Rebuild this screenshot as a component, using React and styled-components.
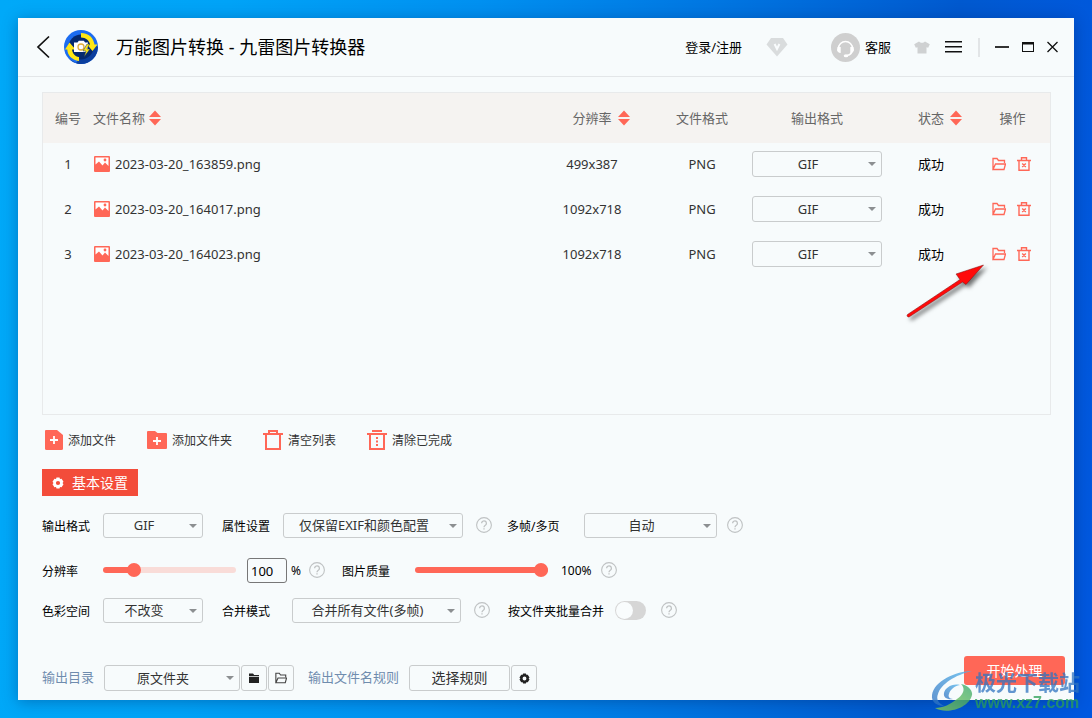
import { useState } from 'react';
import styled, { createGlobalStyle } from 'styled-components';

const GlobalStyle = createGlobalStyle`
  * {
    box-sizing: border-box;
  }
  body {
    margin: 0;
    font-family: 'Noto Sans', 'Noto Sans CJK SC', sans-serif;
    font-size: 13px;
    line-height: 20px;
    color: #333;
  }
  button, input, select {
    font: inherit;
    color: inherit;
    margin: 0;
  }
  svg {
    display: block;
    flex: none;
  }
`;

const Desktop = styled.div`
  position: relative;
  display: flex;
  min-height: 100vh;
  padding: 18px;
  overflow: hidden;
  background: linear-gradient(
    94deg,
    #00a9f8 0%,
    #00a3f7 20%,
    #0090f0 42%,
    #0077e2 62%,
    #0059cf 84%,
    #0058e0 100%
  );
`;

const Window = styled.main`
  flex: 1;
  min-width: 0;
  display: flex;
  flex-direction: column;
  background: #f7fbfc;
  box-shadow: 0 2px 14px rgba(0, 30, 90, 0.35);
`;

const TitleBar = styled.header`
  display: flex;
  align-items: center;
  height: 59px;
  padding: 0 16px 0 18px;
  border-bottom: 1px solid #e3e6e8;
  color: #000;
`;

const Title = styled.h1`
  flex: 1;
  margin: 0 0 0 18px;
  font-size: 18px;
  line-height: 28px;
  font-weight: 400;
`;

const IconButton = styled.button`
  display: flex;
  align-items: center;
  gap: 5px;
  padding: 0;
  border: 0;
  background: none;
  cursor: pointer;
`;

const TitleTools = styled.div`
  display: flex;
  align-items: center;
  gap: ${props => props.$gap}px;
  margin-left: ${props => props.$left || 0}px;
`;

const Divider = styled.span`
  width: 2px;
  height: 19px;
  margin: 0 15px 0 16px;
  background: #e2e5e7;
`;

const Content = styled.div`
  flex: 1;
  display: flex;
  flex-direction: column;
  padding: 15px 23px 0 24px;
`;

const ListPanel = styled.section`
  position: relative;
  flex: 1;
  min-height: 190px;
  border: 1px solid #e8eaeb;
`;

const FileTable = styled.table`
  width: 100%;
  table-layout: fixed;
  border-collapse: collapse;
  text-align: center;
`;

const Col = styled.col`
  width: ${props => (props.$width ? `${props.$width}px` : 'auto')};
`;

const HeadCell = styled.th`
  height: 50px;
  padding: 0;
  background: #f5f3f1;
  font-weight: 400;
  color: #666;
  text-align: ${props => (props.$left ? 'left' : 'center')};
`;

const Cell = styled.td`
  height: 45px;
  padding: 0 0 3px;
`;

const Status = styled(Cell)`
  color: #000;
`;

const SortLabel = styled.span`
  display: grid;
  grid-template-columns: ${props => (props.$left ? 'auto 1fr' : '1fr auto 1fr')};
  align-items: center;
  gap: ${props => (props.$left ? 4 : 6)}px;
  span {
    grid-column: ${props => (props.$left ? 1 : 2)};
  }
`;

const FileName = styled.div`
  display: flex;
  align-items: center;
  gap: 5px;
  padding-left: 1px;
`;

const RowActions = styled.div`
  display: flex;
  justify-content: center;
  gap: 11px;
  padding-right: 2px;
`;

const SelectBox = styled.span`
  position: relative;
  display: inline-block;
  vertical-align: middle;
  width: ${props => props.$width}px;
  height: ${props => (props.$tall ? 26 : 25)}px;
  &::after {
    content: '';
    position: absolute;
    right: 6px;
    top: 11px;
    border: 4px solid transparent;
    border-top-color: #8c8f91;
    border-bottom: 0;
    pointer-events: none;
  }
  select {
    appearance: none;
    display: block;
    width: 100%;
    height: 100%;
    padding: 0 18px ${props => (props.$tall ? 0 : 2)}px 0;
    border: 1px solid #c9cccd;
    border-radius: 3px;
    background: transparent;
    text-align: center;
    text-align-last: center;
  }
`;

const Toolbar = styled.div`
  display: flex;
  gap: 31px;
  margin-top: 15px;
  padding-left: 1px;
  font-size: 12px;
  span {
    padding-top: 2px;
  }
`;

const ToolButton = styled(IconButton)`
  height: 20px;
`;

const SettingsTab = styled.button`
  display: flex;
  align-items: center;
  align-self: flex-start;
  gap: 8px;
  height: 27px;
  margin-top: 19px;
  padding: 0 10px;
  border: 0;
  background: #f34c3a;
  color: #fff;
  font-size: 14px;
`;

const SettingRow = styled.div`
  display: flex;
  align-items: center;
  height: 25px;
  margin-top: ${props => props.$top}px;
`;

const Label = styled.label`
  width: ${props => props.$width}px;
  margin-left: ${props => props.$left || 0}px;
  padding-top: 2px;
  color: #000;
  font-size: 12px;
  white-space: nowrap;
`;

const Help = styled.button`
  display: flex;
  padding: 0;
  border: 0;
  background: none;
  margin: 0 0 1px ${props => props.$left}px;
`;

const Slider = styled.input`
  appearance: none;
  width: 133px;
  height: 6px;
  margin-bottom: 1px;
  border-radius: 3px;
  background: linear-gradient(
    90deg,
    #ff6757 ${props => props.$fill}%,
    #f9dcd8 ${props => props.$fill}%
  );
  &::-webkit-slider-thumb {
    appearance: none;
    width: 14px;
    height: 14px;
    border-radius: 50%;
    background: #ff6757;
  }
`;

const NumberBox = styled.input`
  width: 40px;
  height: 25px;
  margin: 0 4px 0 11px;
  padding: 0 3px;
  border: 1px solid #777;
  border-radius: 3px;
  background: transparent;
  color: #000;
`;

const Value = styled.output`
  margin-left: ${props => props.$left || 0}px;
  color: #000;
  font-size: 12px;
`;

const Switch = styled.input`
  appearance: none;
  display: flex;
  width: 31px;
  height: 19px;
  margin-left: 11px;
  padding: 1px;
  border-radius: 10px;
  background: #d6d6d6;
  &::before {
    content: '';
    width: 17px;
    height: 17px;
    border-radius: 50%;
    background: #f9fcfd;
  }
  &:checked {
    justify-content: flex-end;
    background: #ff6757;
  }
`;

const Footer = styled.footer`
  display: flex;
  align-items: flex-start;
  justify-content: space-between;
  margin-top: 33px;
  padding: 0 9px 9px 24px;
`;

const OutputBar = styled.div`
  display: flex;
  align-items: center;
  padding-top: 9px;
`;

const OutputLabel = styled.label`
  margin: 0 ${props => props.$right}px 0 ${props => props.$left || 0}px;
  padding-bottom: 2px;
  color: #6f8cae;
`;

const SmallButton = styled.button`
  display: flex;
  align-items: center;
  justify-content: center;
  width: ${props => (props.$wide ? 101 : 26)}px;
  height: 26px;
  margin-left: 1px;
  padding: 0;
  border: 1px solid #c9cccd;
  border-radius: 3px;
  background: transparent;
  font-size: 14px;
`;

const StartButton = styled.button`
  width: 101px;
  height: 29px;
  padding: 0;
  border: 0;
  border-radius: 3px;
  background: #ff6757;
  color: #fff;
  font-size: 14px;
`;

const Pointer = styled.svg`
  position: absolute;
  right: 56px;
  top: 168px;
  pointer-events: none;
`;

const Watermark = styled.div`
  position: absolute;
  right: 12px;
  bottom: 6px;
  display: flex;
  align-items: center;
  gap: 2px;
  opacity: 0.75;
  pointer-events: none;
`;

const WatermarkText = styled.div`
  font-size: 21px;
  line-height: 24px;
  font-weight: 700;
  color: #2f74c0;
  white-space: nowrap;
`;

const WatermarkUrl = styled.div`
  font-family: 'Liberation Sans', Arial, sans-serif;
  font-size: 16px;
  line-height: 18px;
  font-weight: 700;
  color: #2a9f55;
`;

const LogoIcon = () => (
  <svg width="34" height="34" viewBox="0 0 34 34">
    <circle cx="17" cy="17" r="17" fill="#1c6cf0" />
    <path d="M5 29a17 17 0 0 0 29-12l-6-4-16 20z" fill="#0c3f9e" />
    <circle cx="17" cy="17" r="12.500" fill="#05296f" />
    <path d="M17 3c8 0 12.500 5 13.500 11.500h3L28.500 21l-5.500-6.500h3C25 10.500 22 7.500 17 7.500z" fill="#ffe715" />
    <path d="M15 31C7.500 30 3.500 25 3.300 19.500H1L5.500 12.500l6 7H8c.5 4 3 7 7 7.500z" fill="#ffe715" />
    <path d="M10 12.500h3.500l1.300-1.800h5l1.300 1.800H24v9.500H10z" fill="#fff" />
    <circle cx="17" cy="17" r="3" fill="none" stroke="#e0ad3c" strokeWidth="1.300" />
    <path d="M23 14l-4 7h3l-2 6 6-8h-3l2.500-5z" fill="#ffe715" stroke="#05296f" strokeWidth=".5" />
  </svg>
);

const BackIcon = () => (
  <svg width="14" height="24" viewBox="0 0 14 24" fill="none" stroke="#111" strokeWidth="1.700">
    <path d="M13 1.500L2 12l11 10.500" />
  </svg>
);

const DiamondIcon = () => (
  <svg width="22" height="20" viewBox="0 0 22 20">
    <path d="M5 1h12l4.500 6.500L11 19.500.5 7.500z" fill="#d9dcdd" />
    <path d="M8.600 7l2.400 5 2.400-5" fill="none" stroke="#f9fcfd" strokeWidth="2" />
  </svg>
);

const HeadsetIcon = () => (
  <svg width="29" height="29" viewBox="0 0 29 29">
    <circle cx="14.500" cy="14.500" r="14.500" fill="#cfcfcf" />
    <path d="M7.500 15.500a7 7 0 1 1 14 0c0 4-2 6.500-5.500 7" fill="none" stroke="#fff" strokeWidth="1.500" />
    <path d="M6.500 14h3.200v6C7.500 20 6 18.500 6 17zM22.500 14h-3.200v6c2.200 0 3.700-1.500 3.700-3z" fill="#fff" />
    <ellipse cx="15" cy="22.700" rx="2.300" ry="1.500" fill="#fff" />
  </svg>
);

const ShirtIcon = () => (
  <svg width="16" height="13" viewBox="0 0 16 13" fill="#cfd1d2">
    <path d="M5 .5c1.500 1.700 4.500 1.700 6 0l4.800 2.800-1.600 3.500-1.700-.6v6.300h-9V6.200l-1.700.6L.2 3.300z" />
  </svg>
);

const MenuIcon = () => (
  <svg width="17" height="12" viewBox="0 0 17 12" fill="#111">
    <path d="M0 0h17v1.500H0zM0 5h17v1.500H0zM0 10h17v1.500H0z" />
  </svg>
);

const MinimizeIcon = () => (
  <svg width="14" height="12" viewBox="0 0 14 12">
    <path d="M0 5h14v2H0z" fill="#333" />
  </svg>
);

const MaximizeIcon = () => (
  <svg width="12" height="10" viewBox="0 0 12 10">
    <path d="M0 0h12v10H0zM1 2.500V9h10V2.500z" fill="#111" fillRule="evenodd" />
  </svg>
);

const CloseIcon = () => (
  <svg width="11" height="12" viewBox="0 0 11 12" stroke="#111" strokeWidth="1.300">
    <path d="M.5 1l10 10M10.500 1l-10 10" />
  </svg>
);

const SortIcon = () => (
  <svg width="12" height="16" viewBox="0 0 12 16" fill="#ff6757">
    <path d="M6 .5L12 7H0zM6 15.500L0 9h12z" />
  </svg>
);

const PictureIcon = () => (
  <svg width="16" height="16" viewBox="0 0 16 16">
    <rect width="16" height="16" rx="1" fill="#ff6757" />
    <path d="M1.500 1.500h13V10L11 6.500 8.500 9.500 5 5.500l-3.500 3z" fill="#fff" />
    <circle cx="11" cy="4" r="1.400" fill="#ff6757" />
  </svg>
);

const OpenFolderIcon = ({ color = '#ff6757', size = 14 }) => (
  <svg width={size} height={size} viewBox="0 0 14 14" fill="none" stroke={color} strokeWidth="1.300">
    <path d="M1 12.500v-11h4l1.500 2h6V6M1 12.500L3.500 7h10L12 12.500z" />
  </svg>
);

const FolderIcon = () => (
  <svg width="12" height="12" viewBox="0 0 12 12" fill="#222">
    <path d="M1 1.500h4L6.200 3H11v1H1zM1 4.700h10V11H1z" />
  </svg>
);

const DeleteIcon = () => (
  <svg width="14" height="14" viewBox="0 0 14 14" fill="none" stroke="#ff6757" strokeWidth="1.400">
    <path d="M0 3.500h14M4.500 3.500V.8h5v2.700M2 3.500v9.800h10V3.500M5.200 6.500l3.600 3.600M8.800 6.500l-3.600 3.600" />
  </svg>
);

const AddFileIcon = () => (
  <svg width="20" height="20" viewBox="0 0 20 20">
    <path d="M3 0h11l6 5v13.500a1.500 1.500 0 0 1-1.500 1.500h-15A1.500 1.500 0 0 1 2 18.500V1a1 1 0 0 1 1-1z" fill="#ff6757" />
    <path d="M11 6v8M7 10h8" stroke="#fff" strokeWidth="1.800" />
  </svg>
);

const AddFolderIcon = () => (
  <svg width="20" height="20" viewBox="0 0 20 20">
    <path d="M1 1h7l2.500 2H19a1 1 0 0 1 1 1v14a1 1 0 0 1-1 1H1a1 1 0 0 1-1-1V2a1 1 0 0 1 1-1z" fill="#ff6757" />
    <path d="M10 7v8M6 11h8" stroke="#fff" strokeWidth="1.800" />
  </svg>
);

const ClearIcon = () => (
  <svg width="20" height="20" viewBox="0 0 20 20" fill="none" stroke="#ff6757" strokeWidth="2">
    <path d="M0 4h20M6 4V1h8v3M3 4v15h14V4" />
  </svg>
);

const ClearDoneIcon = () => (
  <svg width="20" height="20" viewBox="0 0 20 20" fill="none" stroke="#ff6757" strokeWidth="2">
    <path d="M5 1h10M0 4h20M3 4v15h14V4" />
    <path d="M10 7v9" strokeDasharray="2 1.500" />
  </svg>
);

const GearIcon = ({ color, size }) => (
  <svg width={size} height={size} viewBox="0 0 12 12">
    <path
      d="M4.500.5h3L8 2l1.600-.2 1.900 3L10.500 6l1 1.200-1.900 3L8 10l-.5 1.500h-3L4 10l-1.600.2-1.900-3L1.500 6l-1-1.200 1.900-3L4 2zM6 3.900a2.100 2.100 0 1 0 0 4.200 2.100 2.100 0 0 0 0-4.200z"
      fill={color}
      fillRule="evenodd"
    />
  </svg>
);

const HelpIcon = () => (
  <svg width="16" height="16" viewBox="0 0 16 16" fill="none" stroke="#bfc2c3">
    <circle cx="8" cy="8" r="7.400" strokeWidth="1.100" />
    <path d="M5.600 6.300a2.400 2.400 0 1 1 3.700 2C8.400 8.900 8 9.200 8 10.200M8 11.300v1.300" strokeWidth="1.300" />
  </svg>
);

const WatermarkIcon = () => (
  <svg width="42" height="42" viewBox="0 0 42 42">
    <defs>
      <linearGradient id="swirlTop" x1="0" y1="1" x2="1" y2="0">
        <stop offset="0" stopColor="#2d6fc0" />
        <stop offset="1" stopColor="#4fb4ec" />
      </linearGradient>
      <linearGradient id="swirlBottom" x1="0" y1="1" x2="1" y2="0">
        <stop offset="0" stopColor="#8fcf4a" />
        <stop offset="1" stopColor="#2fa468" />
      </linearGradient>
    </defs>
    <path d="M41 1C25 1 3 11 1 25c-1 7 5 11 12 11-6-3-8-7-6-12C10 14 24 5 41 1z" fill="url(#swirlTop)" />
    <path d="M29 15c-8-2-15 3-16 8-1 5 4 7 9 6-4 0-5-3-4-5 1-4 5-8 11-9z" fill="url(#swirlTop)" />
    <path d="M30 14c5 5 2 11-4 15-6 5-14 9-22 9 12 7 34 0 37-13 1-5-5-10-11-11z" fill="url(#swirlBottom)" />
  </svg>
);

const Select = ({ id, label, options, ...box }) => (
  <SelectBox {...box}>
    <select id={id} aria-label={label}>
      {options.map(option => (
        <option key={option}>{option}</option>
      ))}
    </select>
  </SelectBox>
);

const HelpButton = ({ left }) => (
  <Help type="button" aria-label="帮助" $left={left}>
    <HelpIcon />
  </Help>
);

const files = [
  { name: '2023-03-20_163859.png', size: '499x387' },
  { name: '2023-03-20_164017.png', size: '1092x718' },
  { name: '2023-03-20_164023.png', size: '1092x718' },
];

const Files = () => (
  <FileTable>
    <colgroup>
      <Col $width={50} />
      <Col />
      <Col $width={130} />
      <Col $width={90} />
      <Col $width={140} />
      <Col $width={88} />
      <Col $width={75} />
    </colgroup>
    <thead>
      <tr>
        <HeadCell>编号</HeadCell>
        <HeadCell $left>
          <SortLabel $left>
            <span>文件名称</span>
            <SortIcon />
          </SortLabel>
        </HeadCell>
        <HeadCell>
          <SortLabel>
            <span>分辨率</span>
            <SortIcon />
          </SortLabel>
        </HeadCell>
        <HeadCell>文件格式</HeadCell>
        <HeadCell>输出格式</HeadCell>
        <HeadCell>
          <SortLabel>
            <span>状态</span>
            <SortIcon />
          </SortLabel>
        </HeadCell>
        <HeadCell>操作</HeadCell>
      </tr>
    </thead>
    <tbody>
      {files.map((file, index) => (
        <tr key={file.name}>
          <Cell>{index + 1}</Cell>
          <Cell>
            <FileName>
              <PictureIcon />
              {file.name}
            </FileName>
          </Cell>
          <Cell>{file.size}</Cell>
          <Cell>PNG</Cell>
          <Cell>
            <Select label="输出格式" options={['GIF']} $width={130} $tall />
          </Cell>
          <Status>成功</Status>
          <Cell>
            <RowActions>
              <IconButton type="button" aria-label="打开文件夹">
                <OpenFolderIcon />
              </IconButton>
              <IconButton type="button" aria-label="删除">
                <DeleteIcon />
              </IconButton>
            </RowActions>
          </Cell>
        </tr>
      ))}
    </tbody>
  </FileTable>
);

const Settings = () => {
  const [scale, setScale] = useState(100);
  const [quality, setQuality] = useState(100);

  return (
    <>
      <SettingRow $top={17}>
        <Label htmlFor="format" $width={61}>输出格式</Label>
        <Select id="format" options={['GIF']} $width={100} />
        <Label htmlFor="attrs" $width={61} $left={19}>属性设置</Label>
        <Select id="attrs" options={['仅保留EXIF和颜色配置']} $width={180} />
        <HelpButton left={13} />
        <Label htmlFor="frames" $width={77} $left={15}>多帧/多页</Label>
        <Select id="frames" options={['自动']} $width={133} />
        <HelpButton left={10} />
      </SettingRow>
      <SettingRow $top={20}>
        <Label htmlFor="scale" $width={61}>分辨率</Label>
        <Slider
          id="scale"
          type="range"
          min="0"
          max="500"
          value={scale}
          $fill={scale / 5}
          onChange={e => setScale(Number(e.target.value))}
        />
        <NumberBox
          type="text"
          aria-label="分辨率百分比"
          value={scale}
          onChange={e => setScale(Number(e.target.value) || 0)}
        />
        <Value>%</Value>
        <HelpButton left={8} />
        <Label htmlFor="quality" $width={73} $left={17}>图片质量</Label>
        <Slider
          id="quality"
          type="range"
          value={quality}
          $fill={quality}
          onChange={e => setQuality(Number(e.target.value))}
        />
        <Value $left={13}>{quality}%</Value>
        <HelpButton left={9} />
      </SettingRow>
      <SettingRow $top={15}>
        <Label htmlFor="color" $width={61}>色彩空间</Label>
        <Select id="color" options={['不改变']} $width={100} />
        <Label htmlFor="merge" $width={70} $left={19}>合并模式</Label>
        <Select id="merge" options={['合并所有文件(多帧)']} $width={169} />
        <HelpButton left={13} />
        <Label htmlFor="batch" $width={96} $left={18}>按文件夹批量合并</Label>
        <Switch id="batch" type="checkbox" />
        <HelpButton left={15} />
      </SettingRow>
    </>
  );
};

const App = () => (
  <>
    <GlobalStyle />
    <Desktop>
      <Window>
        <TitleBar>
          <IconButton type="button" aria-label="返回">
            <BackIcon />
          </IconButton>
          <TitleTools $left={14}>
            <LogoIcon />
          </TitleTools>
          <Title>万能图片转换 - 九雷图片转换器</Title>
          <TitleTools $gap={24}>
            <IconButton type="button">登录/注册</IconButton>
            <IconButton type="button" aria-label="会员">
              <DiamondIcon />
            </IconButton>
          </TitleTools>
          <TitleTools $gap={23} $left={43}>
            <IconButton type="button">
              <HeadsetIcon />
              客服
            </IconButton>
            <IconButton type="button" aria-label="皮肤">
              <ShirtIcon />
            </IconButton>
          </TitleTools>
          <TitleTools $left={15}>
            <IconButton type="button" aria-label="菜单">
              <MenuIcon />
            </IconButton>
          </TitleTools>
          <Divider />
          <TitleTools $gap={13}>
            <IconButton type="button" aria-label="最小化">
              <MinimizeIcon />
            </IconButton>
            <IconButton type="button" aria-label="最大化">
              <MaximizeIcon />
            </IconButton>
            <IconButton type="button" aria-label="关闭">
              <CloseIcon />
            </IconButton>
          </TitleTools>
        </TitleBar>

        <Content>
          <ListPanel>
            <Files />
            <Pointer width="90" height="66" viewBox="0 0 90 66">
              <defs>
                <filter id="pointerShadow" x="-20%" y="-20%" width="150%" height="150%" colorInterpolationFilters="sRGB">
                  <feDropShadow dx="3" dy="3" stdDeviation="2" floodColor="#000" floodOpacity=".55" />
                </filter>
              </defs>
              <path
                d="M3.500 53.500L56 18.500l-4-5.500L79.500 4 62 23.500l-3.500-2.500L5 56a1.500 1.500 0 0 1-1.500-2.500z"
                fill="#ff0a0a"
                stroke="#7d1010"
                strokeWidth=".5"
                filter="url(#pointerShadow)"
              />
            </Pointer>
          </ListPanel>
          <Toolbar>
            <ToolButton type="button">
              <AddFileIcon />
              <span>添加文件</span>
            </ToolButton>
            <ToolButton type="button">
              <AddFolderIcon />
              <span>添加文件夹</span>
            </ToolButton>
            <ToolButton type="button">
              <ClearIcon />
              <span>清空列表</span>
            </ToolButton>
            <ToolButton type="button">
              <ClearDoneIcon />
              <span>清除已完成</span>
            </ToolButton>
          </Toolbar>
          <SettingsTab type="button">
            <GearIcon color="#fff" size={12} />
            基本设置
          </SettingsTab>
          <Settings />
        </Content>

        <Footer>
          <OutputBar>
            <OutputLabel htmlFor="output" $right={10}>输出目录</OutputLabel>
            <Select id="output" options={['原文件夹']} $width={136} $tall />
            <SmallButton type="button" aria-label="选择目录">
              <FolderIcon />
            </SmallButton>
            <SmallButton type="button" aria-label="打开目录">
              <OpenFolderIcon color="#444" size={12} />
            </SmallButton>
            <OutputLabel htmlFor="rule" $left={14} $right={9}>输出文件名规则</OutputLabel>
            <SmallButton id="rule" type="button" $wide>选择规则</SmallButton>
            <SmallButton type="button" aria-label="规则设置">
              <GearIcon color="#222" size={11} />
            </SmallButton>
          </OutputBar>
          <StartButton type="button">开始处理</StartButton>
        </Footer>
      </Window>
      <Watermark>
        <WatermarkIcon />
        <div>
          <WatermarkText>极光下载站</WatermarkText>
          <WatermarkUrl>www.xz7.com</WatermarkUrl>
        </div>
      </Watermark>
    </Desktop>
  </>
);

export default App;
